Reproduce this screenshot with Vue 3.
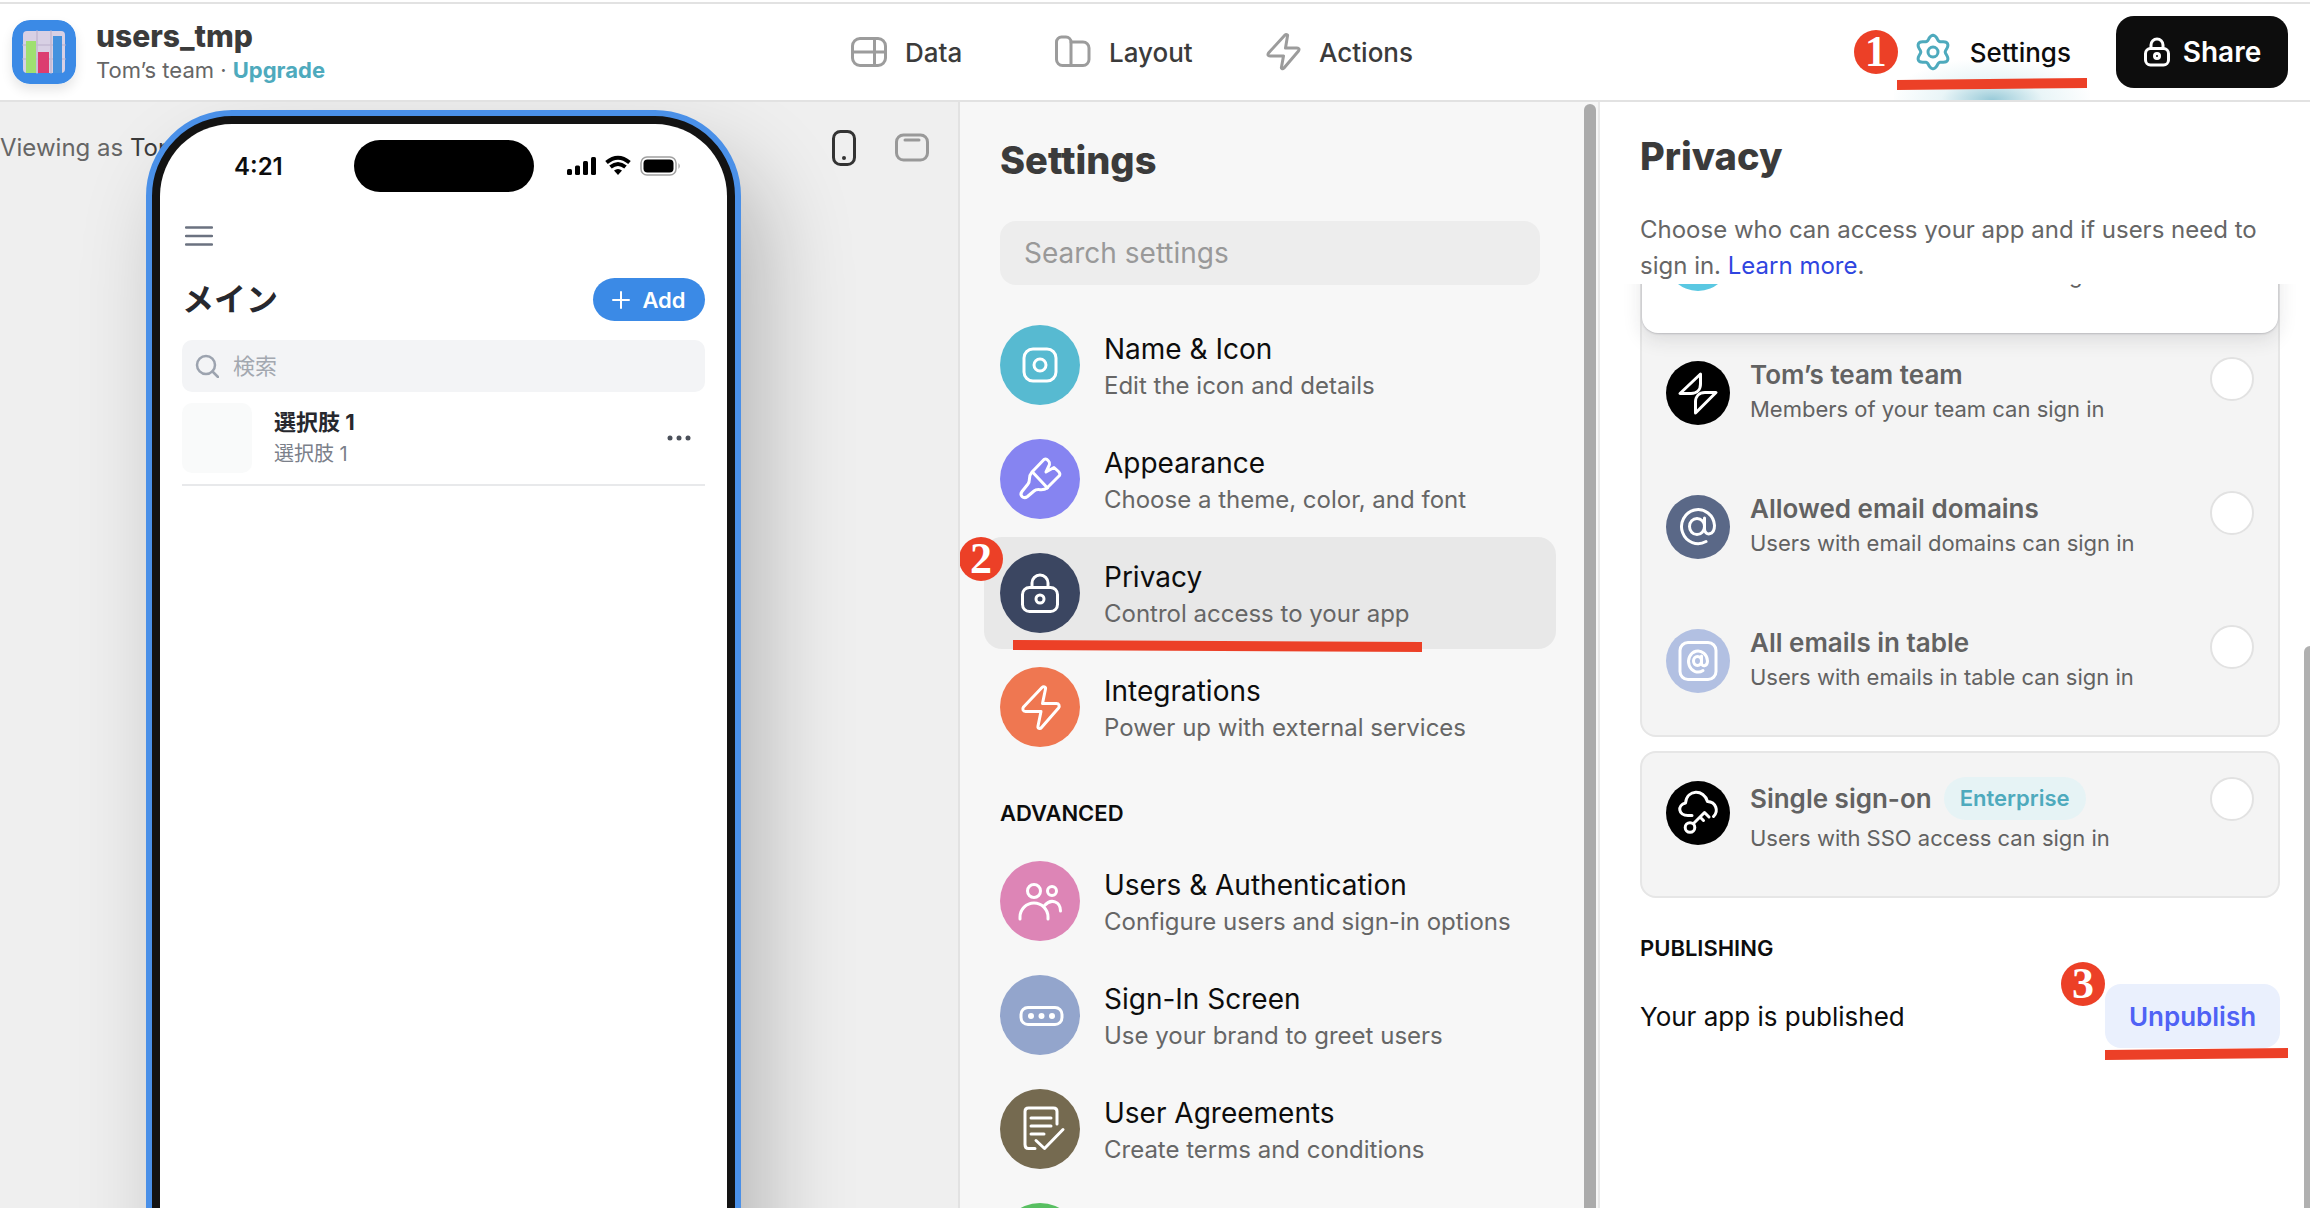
<template>
  <div class="app">
    <header class="topbar">
      <div class="brand">
        <svg class="app-icon" viewBox="0 0 64 64" aria-hidden="true">
          <rect width="64" height="64" rx="18" fill="#3b8ae6" />
          <rect x="11" y="11" width="42" height="42" rx="4" fill="#d8d0e4" />
          <path d="M25 11v42M39 11v42M11 25h42M11 39h42" stroke="#c3b9d2" stroke-width="1.5" />
          <rect x="14" y="21" width="10" height="32" fill="#9fe070" />
          <rect x="26" y="32" width="11" height="21" fill="#dc3d70" />
          <rect x="41" y="16" width="9" height="37" fill="#4592de" />
        </svg>
        <div>
          <div class="app-name">users_tmp</div>
          <div class="team">Tom’s team · <a href="#" class="upgrade">Upgrade</a></div>
        </div>
      </div>

      <nav class="tabs">
        <a v-for="tab in tabs" :key="tab.label" href="#" class="tab">
          <svg class="tab-icon" viewBox="0 0 40 40" aria-hidden="true">
            <path v-for="d in tab.paths" :key="d" :d="d" />
          </svg>
          {{ tab.label }}
        </a>
      </nav>

      <div class="top-actions">
        <a href="#" class="settings-link">
          <svg class="gear" viewBox="0 0 38 38" aria-hidden="true">
            <path :d="gearPath" />
            <circle cx="19" cy="19" r="5" />
          </svg>
          <span>Settings</span>
          <span class="step step-settings">1</span>
          <span class="mark mark-settings"></span>
        </a>
        <button class="share" type="button">
          <svg class="share-icon" viewBox="0 0 28 30" aria-hidden="true">
            <rect x="2.5" y="11.5" width="23" height="16.5" rx="5" />
            <path d="M8 11V8a6 6 0 0 1 12 0v3" />
            <circle cx="14" cy="19" r="2.5" />
          </svg>
          Share
        </button>
      </div>
    </header>

    <main class="workspace">
      <section class="stage">
        <div class="viewing">Viewing as <span>Tom</span></div>
        <div class="phone">
          <div class="screen">
            <div class="status-bar">
              <span class="clock">4:21</span>
              <span class="island"></span>
              <svg class="status-icons" viewBox="0 0 116 22" aria-hidden="true">
                <rect x="1" y="14" width="5" height="6" rx="1.5" />
                <rect x="9" y="10.5" width="5" height="9.5" rx="1.5" />
                <rect x="17" y="6" width="5" height="14" rx="1.5" />
                <rect x="25" y="2" width="5" height="18" rx="1.5" />
                <path d="M40.5 7.5q11.5-9.5 23 0" class="wave" />
                <path d="M44.5 12q7.5-6 15 0" class="wave" />
                <path d="M48 15.5q4-3 8 0l-4 4.5z" />
                <rect x="75" y="2" width="35" height="18" rx="6" class="battery" />
                <rect x="77.5" y="4.5" width="30" height="13" rx="4" />
                <path d="M112.5 8v6q2.5-3 0-6z" fill="#a0a0a0" />
              </svg>
            </div>
            <button class="menu" type="button" aria-label="Menu">
              <svg viewBox="0 0 28 20"><path d="M1 1.5h26M1 10h26M1 18.5h26" /></svg>
            </button>
            <div class="screen-head">
              <h2>メイン</h2>
              <button class="add" type="button">
                <svg viewBox="0 0 18 18" aria-hidden="true"><path d="M9 1v16M1 9h16" /></svg>
                Add
              </button>
            </div>
            <label class="phone-search">
              <svg viewBox="0 0 24 24" aria-hidden="true"><circle cx="11" cy="11" r="9" /><path d="M17.5 17.5l5.5 5.5" /></svg>
              <input type="text" placeholder="検索" aria-label="検索" />
            </label>
            <div class="record">
              <div class="thumb"></div>
              <div class="record-text">
                <div class="record-title">選択肢 1</div>
                <div class="record-sub">選択肢 1</div>
              </div>
              <button class="more" type="button" aria-label="More">
                <svg viewBox="0 0 24 6"><circle cx="3" cy="3" r="2.5" /><circle cx="12" cy="3" r="2.5" /><circle cx="21" cy="3" r="2.5" /></svg>
              </button>
            </div>
          </div>
        </div>
        <div class="devices">
          <button type="button" aria-label="Phone">
            <svg viewBox="0 0 40 40"><rect x="9.5" y="3.5" width="21" height="33" rx="7" stroke="#333" /><circle cx="20" cy="30" r="2" fill="#333" /></svg>
          </button>
          <button type="button" aria-label="Tablet">
            <svg viewBox="0 0 40 40"><rect x="4.5" y="7" width="31" height="25" rx="7" stroke="#999" /><path d="M13 12h14" stroke="#999" /></svg>
          </button>
        </div>
      </section>

      <section class="settings">
        <h1>Settings</h1>
        <input class="search" type="text" placeholder="Search settings" aria-label="Search settings" />
        <nav class="group">
          <a v-for="item in general" :key="item.title" href="#" class="item" :class="[item.tone, { active: item.active }]">
            <svg class="badge" viewBox="0 0 80 80" aria-hidden="true">
              <path v-for="d in item.paths" :key="d" :d="d" />
            </svg>
            <span class="item-text">
              <span class="item-title">{{ item.title }}</span>
              <span class="item-sub">{{ item.sub }}</span>
            </span>
            <template v-if="item.active">
              <span class="step step-privacy">2</span>
              <span class="mark mark-privacy"></span>
            </template>
          </a>
        </nav>
        <h3 class="caption">ADVANCED</h3>
        <nav class="group">
          <a v-for="item in advanced" :key="item.title" href="#" class="item" :class="item.tone">
            <svg class="badge" viewBox="0 0 80 80" aria-hidden="true">
              <path v-for="d in item.paths" :key="d" :d="d" />
            </svg>
            <span class="item-text">
              <span class="item-title">{{ item.title }}</span>
              <span class="item-sub">{{ item.sub }}</span>
            </span>
          </a>
          <div class="item green"><span class="badge"></span></div>
        </nav>
        <div class="scrollbar"></div>
      </section>

      <section class="privacy">
        <div class="privacy-head">
          <h1>Privacy</h1>
          <p>Choose who can access your app and if users need to sign in. <a href="#">Learn more</a>.</p>
        </div>
        <div class="privacy-body">
          <div class="card card-first">
            <div class="option selected">
              <span class="option-icon cyan"></span>
              <div class="option-text">
                <span class="option-title"></span>
                <span class="option-sub">Users with email access can sign in</span>
              </div>
            </div>
            <label v-for="option in options" :key="option.title" class="option">
              <svg class="option-icon" :class="option.tone" viewBox="0 0 64 64" aria-hidden="true">
                <path v-for="d in option.paths" :key="d" :d="d" />
              </svg>
              <span class="option-text">
                <span class="option-title">{{ option.title }}</span>
                <span class="option-sub">{{ option.sub }}</span>
              </span>
              <input type="radio" name="access" />
            </label>
          </div>

          <div class="card">
            <label class="option">
              <svg class="option-icon black" viewBox="0 0 64 64" aria-hidden="true">
                <path d="M26 34.5h-4C12 34.5 11 24 19.5 22 21 8 38 8 41.5 20.5 50 21 53 30 47.5 35.5" />
                <circle cx="24" cy="46.5" r="4.8" />
                <path d="M27.5 42.5L38.5 31.5l4.5 4.5M34 36l3.5 3.5" />
              </svg>
              <span class="option-text">
                <span class="option-title">Single sign-on <span class="pill">Enterprise</span></span>
                <span class="option-sub">Users with SSO access can sign in</span>
              </span>
              <input type="radio" name="access" />
            </label>
          </div>

          <h3 class="caption">PUBLISHING</h3>
          <div class="publish">
            <span>Your app is published</span>
            <button type="button" class="unpublish">
              Unpublish
              <span class="step step-publish">3</span>
              <span class="mark mark-publish"></span>
            </button>
          </div>
        </div>
        <div class="privacy-scrollbar"></div>
      </section>
    </main>
  </div>
</template>

<script setup>
const bolt = 'M45.5 22L42.5 36.5H56.5c2.5 0 3.5 2.5 2 4.5L41.5 60.5c-1.5 2-4 1-3.5-1.5L41 44.5H25.5c-2.5 0-3.5-2.5-2-4.5L42 20.5c1.5-1.5 4-.5 3.5 1.5z';

const tabs = [
  {
    label: 'Data',
    paths: ['M11 6.5h18a7.5 7.5 0 0 1 7.5 7.5v12a7.5 7.5 0 0 1-7.5 7.5H11A7.5 7.5 0 0 1 3.5 26V14A7.5 7.5 0 0 1 11 6.5z', 'M3.5 20h33M25.5 6.5v27'],
  },
  {
    label: 'Layout',
    paths: ['M8.5 5h4.5a5 5 0 0 1 5 5v23.5H9.5a6 6 0 0 1-6-6V10a5 5 0 0 1 5-5z', 'M18 10h12a6 6 0 0 1 6 6v11.5a6 6 0 0 1-6 6H17'],
  },
  {
    label: 'Actions',
    paths: ['M24.5 4L22.5 16H34c2 0 2.5 1.5 1.5 3L21 36c-1.5 1.5-3 .5-2.5-1L20.5 24H7c-2 0-2.5-1.5-1.5-3L22 3c1-1 3-.5 2.5 1z'],
  },
];

const general = [
  {
    title: 'Name & Icon',
    sub: 'Edit the icon and details',
    tone: 'teal',
    paths: ['M33 24h14a9 9 0 0 1 9 9v14a9 9 0 0 1-9 9H33a9 9 0 0 1-9-9V33a9 9 0 0 1 9-9z', 'M40 34a6 6 0 1 1 0 12a6 6 0 1 1 0-12z'],
  },
  {
    title: 'Appearance',
    sub: 'Choose a theme, color, and font',
    tone: 'violet',
    paths: ['M44 20.5L32 33c-4.5 5-1 8.5-4 12l-6 7.5c-3 4 1.5 8 5.5 5l6.5-5.5c4-3.5 8 1 13-3L59.5 36.5q1-2-1-4L54 28.5l-8 4.5 3.5-7.5q.5-2-1-3.5l-1.5-1.5q-1.5-1-3 0z', 'M32.5 33L47.5 49'],
  },
  {
    title: 'Privacy',
    sub: 'Control access to your app',
    tone: 'navy',
    active: true,
    paths: ['M29.5 34.5h21a7 7 0 0 1 7 7v10a7 7 0 0 1-7 7h-21a7 7 0 0 1-7-7v-10a7 7 0 0 1 7-7z', 'M32 34v-4a8 8 0 0 1 16 0v4', 'M40 42a4 4 0 1 1 0 8a4 4 0 1 1 0-8z'],
  },
  {
    title: 'Integrations',
    sub: 'Power up with external services',
    tone: 'orange',
    paths: [bolt],
  },
];

const advanced = [
  {
    title: 'Users & Authentication',
    sub: 'Configure users and sign-in options',
    tone: 'pink',
    paths: ['M34 23.5a6.5 6.5 0 1 1 0 13a6.5 6.5 0 1 1 0-13z', 'M52 25.5a4.5 4.5 0 1 1 0 9a4.5 4.5 0 1 1 0-9z', 'M20 58v-2a14 14 0 0 1 28 0v2', 'M44.5 44.5C51 37 60.5 40.5 60.5 50'],
  },
  {
    title: 'Sign-In Screen',
    sub: 'Use your brand to greet users',
    tone: 'slate',
    paths: ['M28 32.5h27a7 7 0 0 1 7 7v3a7 7 0 0 1-7 7H28a7 7 0 0 1-7-7v-3a7 7 0 0 1 7-7z', 'M31 39.5a1.5 1.5 0 1 1 0 3a1.5 1.5 0 1 1 0-3z', 'M41.5 39.5a1.5 1.5 0 1 1 0 3a1.5 1.5 0 1 1 0-3z', 'M52 39.5a1.5 1.5 0 1 1 0 3a1.5 1.5 0 1 1 0-3z'],
  },
  {
    title: 'User Agreements',
    sub: 'Create terms and conditions',
    tone: 'brown',
    paths: ['M57 35V22.5q0-3.5-3.5-3.5h-25q-3.5 0-3.5 3.5v33q0 4 3.5 4H35', 'M31 29h20M31 37h20M31 45h13', 'M36 51.5l8.5 8L63 40.5'],
  },
];

const options = [
  {
    title: 'Tom’s team team',
    sub: 'Members of your team can sign in',
    tone: 'black',
    paths: ['M34.5 13L14 32.5h11c6 0 9.5-4 9.5-9.5z', 'M50 31.5H39c-6 0-9.5 4-9.5 9.5v11z'],
  },
  {
    title: 'Allowed email domains',
    sub: 'Users with email domains can sign in',
    tone: 'steel',
    paths: ['M31 23.5a7.5 8 0 1 1 0 16a7.5 8 0 1 1 0-16z', 'M38.5 23v11c0 7 10 7 10-3.5A16.5 17 0 1 0 40 46.5'],
  },
  {
    title: 'All emails in table',
    sub: 'Users with emails in table can sign in',
    tone: 'periwinkle',
    paths: ['M22 13.5h20a8 8 0 0 1 8 8v21a8 8 0 0 1-8 8H22a8 8 0 0 1-8-8v-21a8 8 0 0 1 8-8z', 'M31.5 27.5a4 4.5 0 1 1 0 9a4 4.5 0 1 1 0-9z', 'M35.5 27v7c0 4 6 4 6-2A9.5 10.5 0 1 0 37 41.5'],
  },
];

// six soft teeth around the centre
const gearPath = buildGear(19, 14.5, 2.3, 6);

function buildGear(center, radius, depth, teeth) {
  const points = [];
  for (let deg = 0; deg < 360; deg += 5) {
    const a = (deg * Math.PI) / 180;
    const r = radius + depth * Math.cos(teeth * a);
    points.push(`${(center + r * Math.sin(a)).toFixed(1)} ${(center - r * Math.cos(a)).toFixed(1)}`);
  }
  return `M${points.join('L')}Z`;
}
</script>

<style>
body {
  background: #fff;
}
</style>

<style scoped>
.app {
  display: flex;
  flex-direction: column;
  height: 100vh;
  padding-top: 2px;
  box-sizing: border-box;
  overflow: hidden;
  font-family: Inter, "Noto Sans CJK JP", sans-serif;
  color: #0d0d0d;
}

.app *,
.app *::before {
  box-sizing: border-box;
}

svg {
  display: block;
  flex: none;
  fill: none;
  stroke-width: 3;
  stroke-linecap: round;
  stroke-linejoin: round;
}

a {
  color: inherit;
  text-decoration: none;
}

button {
  padding: 0;
  border: 0;
  background: none;
  font: inherit;
  color: inherit;
}

input {
  font: inherit;
}

h1,
h2,
h3,
p {
  margin: 0;
}

/* top bar */
.topbar {
  display: grid;
  grid-template-columns: 1fr auto 1fr;
  align-items: center;
  height: 100px;
  flex: none;
  border-top: 2px solid #e2e2e2;
  border-bottom: 2px solid #e2e2e2;
}

.brand {
  display: flex;
  align-items: center;
  gap: 20px;
  padding-left: 12px;
}

.app-icon {
  width: 64px;
  height: 64px;
  border-radius: 18px;
  box-shadow: 0 6px 12px rgba(0, 0, 0, 0.1);
}

.app-name {
  padding-top: 2px;
  font-size: 30px;
  line-height: 34px;
  font-weight: 800;
  color: #3b3b3b;
}

.team {
  font-size: 22px;
  line-height: 34px;
  color: #666;
}

.upgrade {
  font-weight: 700;
  color: #4eaabd;
}

.tabs {
  display: grid;
  grid-template-columns: 204px 210px 198px;
}

.tab {
  display: flex;
  align-items: center;
  gap: 16px;
  font-size: 26px;
  font-weight: 500;
  color: #3b3b3b;
}

.tab-icon {
  width: 40px;
  height: 40px;
  stroke: #9c9c9c;
}

.top-actions {
  display: flex;
  align-self: stretch;
  justify-content: flex-end;
  align-items: center;
  gap: 26px;
  padding-right: 22px;
}

.settings-link {
  position: relative;
  display: flex;
  align-items: center;
  align-self: stretch;
  gap: 18px;
  padding: 0 19px 0 20px;
  background: radial-gradient(ellipse 52% 44% at 50% 100%, #98cad8, rgba(200, 230, 236, 0.4) 50%, rgba(255, 255, 255, 0));
  font-size: 26px;
  font-weight: 500;
}

.gear {
  width: 38px;
  height: 38px;
  stroke: #4eaabd;
}

.share {
  display: flex;
  align-items: center;
  justify-content: center;
  gap: 12px;
  width: 172px;
  height: 72px;
  border-radius: 18px;
  background: #0d0d0d;
  color: #fff;
  font-size: 28px;
  font-weight: 600;
}

.share-icon {
  width: 28px;
  height: 30px;
  stroke: #fff;
}

/* red walkthrough marks */
.step {
  position: absolute;
  width: 44px;
  height: 44px;
  border-radius: 50%;
  background: #ec4027;
  color: #fff;
  font-family: "Liberation Serif", serif;
  font-size: 44px;
  font-weight: 700;
  line-height: 44px;
  text-align: center;
}

.mark {
  position: absolute;
  height: 12px;
  background: #ec4027;
  clip-path: polygon(0 2px, 100% 0, 100% 10px, 0 100%);
}

.step-settings {
  top: 26px;
  left: -40px;
}

.mark-settings {
  left: 3px;
  right: 3px;
  bottom: 10px;
}

.step-privacy {
  top: 0;
  left: -25px;
}

.mark-privacy {
  left: 29px;
  width: 409px;
  bottom: -3px;
  clip-path: polygon(0 0, 100% 2px, 100% 100%, 0 10px);
}

.step-publish {
  top: -22px;
  left: -44px;
}

.mark-publish {
  top: 100%;
  left: 0;
  right: -8px;
}

/* workspace */
.workspace {
  display: grid;
  grid-template-columns: 1fr 640px 712px;
  flex: 1;
  min-height: 0;
}

.stage {
  position: relative;
  display: grid;
  grid-template-columns: 595px 1fr;
  padding: 8px 26px 0 146px;
  overflow: hidden;
  background: #efefef;
}

.viewing {
  position: absolute;
  top: 28px;
  left: 0;
  font-size: 24px;
  line-height: 36px;
  color: #666;
}

.viewing span {
  color: #3b3b3b;
}

.phone {
  position: relative;
  height: 1240px;
  padding: 8px;
  border: 6px solid #4a90e8;
  border-radius: 86px;
  background: #131313;
  box-shadow: 24px 48px 90px rgba(0, 0, 0, 0.24);
}

.screen {
  height: 100%;
  padding: 16px 22px;
  border-radius: 72px;
  background: #fff;
}

.status-bar {
  display: grid;
  grid-template-columns: 1fr 180px 1fr;
  align-items: center;
  height: 52px;
}

.clock {
  padding-left: 52px;
  font-size: 24px;
  font-weight: 600;
}

.island {
  height: 52px;
  border-radius: 26px;
  background: #000;
}

.status-icons {
  width: 116px;
  height: 22px;
  margin-left: 32px;
  fill: #000;
}

.wave {
  fill: none;
  stroke: #000;
  stroke-width: 4;
  stroke-linecap: butt;
}

.battery {
  fill: none;
  stroke: #a0a0a0;
  stroke-width: 1.5;
}

.menu {
  display: block;
  margin: 34px 0 0 3px;
}

.menu svg {
  width: 28px;
  height: 20px;
  stroke: #6b7280;
  stroke-width: 2.5;
}

.screen-head {
  display: flex;
  align-items: center;
  justify-content: space-between;
  margin-top: 32px;
}

.screen-head h2 {
  font-size: 32px;
  line-height: 40px;
  font-weight: 700;
  color: #27282e;
}

.add {
  display: flex;
  align-items: center;
  justify-content: center;
  gap: 12px;
  width: 112px;
  height: 43px;
  border-radius: 22px;
  background: #3b8ae6;
  color: #fff;
  font-size: 22px;
  font-weight: 600;
}

.add svg {
  width: 18px;
  height: 18px;
  stroke: #fff;
  stroke-width: 2;
}

.phone-search {
  display: flex;
  align-items: center;
  gap: 14px;
  height: 52px;
  margin-top: 19px;
  padding: 0 13px;
  border-radius: 10px;
  background: #f3f4f6;
}

.phone-search svg {
  width: 24px;
  height: 24px;
  stroke: #9ca3af;
  stroke-width: 2.5;
}

.phone-search input {
  flex: 1;
  min-width: 0;
  padding: 0;
  border: 0;
  background: none;
  font-size: 22px;
}

.phone-search input::placeholder {
  color: #a3a8b0;
}

.record {
  display: flex;
  align-items: center;
  height: 94px;
  border-bottom: 2px solid #e8e9eb;
}

.thumb {
  width: 70px;
  height: 70px;
  border-radius: 10px;
  background: #f9fafa;
}

.record-text {
  flex: 1;
  margin-left: 22px;
}

.record-title {
  font-size: 22px;
  line-height: 32px;
  font-weight: 700;
  color: #27282e;
}

.record-sub {
  font-size: 20px;
  line-height: 32px;
  color: #7b808a;
}

.more {
  margin-right: 14px;
}

.more svg {
  width: 24px;
  height: 6px;
  fill: #4b505a;
}

.devices {
  display: flex;
  justify-content: flex-end;
  gap: 28px;
  height: 40px;
  margin-top: 18px;
}

.devices svg {
  width: 40px;
  height: 40px;
}

/* settings list */
.settings {
  position: relative;
  padding: 35px 42px 0 24px;
  overflow: hidden;
  border-left: 2px solid #e2e2e2;
  background: #f7f7f7;
}

h1 {
  font-size: 38px;
  line-height: 46px;
  font-weight: 800;
  color: #3b3b3b;
}

.settings h1 {
  padding-left: 16px;
}

.search {
  display: block;
  width: 540px;
  height: 64px;
  margin: 38px 0 24px 16px;
  padding: 0 24px;
  border: 0;
  border-radius: 16px;
  background: #ededed;
  font-size: 28px;
}

.search::placeholder {
  color: #999;
}

.group {
  display: flex;
  flex-direction: column;
  gap: 2px;
}

.item {
  position: relative;
  display: flex;
  align-items: center;
  gap: 24px;
  height: 112px;
  padding: 0 16px;
  border-radius: 18px;
}

.item.active {
  background: #e8e8e8;
  /* keeps the step number above the panel edge */
  z-index: 1;
}

.badge {
  flex: none;
  width: 80px;
  height: 80px;
  border-radius: 50%;
  background: var(--tone);
  stroke: #fff;
}

.teal { --tone: #57bad1; }
.violet { --tone: #8684f1; }
.navy { --tone: #3b4661; }
.orange { --tone: #ef7751; }
.pink { --tone: #dd85b6; }
.slate { --tone: #93a5cc; }
.brown { --tone: #756a50; }
.green { --tone: #58bf61; }
.black { --tone: #000; }
.steel { --tone: #5a6887; }
.periwinkle { --tone: #b2c0e2; }
.cyan { --tone: #5ac8e2; }

.item-text {
  display: flex;
  flex-direction: column;
  padding-top: 6px;
  line-height: 36px;
}

.item-title {
  font-size: 28px;
}

.item-sub {
  font-size: 24px;
  line-height: 38px;
  color: #666;
}

.caption {
  font-size: 22px;
  line-height: 28px;
  font-weight: 600;
}

.settings .caption {
  margin: 36px 0 18px;
  padding-left: 16px;
}

.scrollbar {
  position: absolute;
  top: 2px;
  right: 2px;
  bottom: 0;
  width: 12px;
  border-radius: 6px 6px 0 0;
  background: #ababab;
}

/* privacy panel */
.privacy {
  position: relative;
  display: flex;
  flex-direction: column;
  min-height: 0;
  border-left: 2px solid #e8e8e8;
  background: #fff;
}

.privacy-head {
  padding: 31px 40px 0;
}

.privacy-head p {
  margin-top: 33px;
  font-size: 24px;
  line-height: 36px;
  color: #666;
}

.privacy-head a {
  color: #2f45e0;
}

.privacy-body {
  flex: 1;
  min-height: 0;
  padding: 0 30px 0 40px;
  overflow: hidden;
}

.card {
  margin-bottom: 14px;
  border: 2px solid #e6e6e6;
  border-radius: 16px;
  background: #f4f4f4;
}

.card-first {
  margin-top: -87px;
}

.option {
  display: flex;
  align-items: flex-start;
  gap: 20px;
  padding: 24px 24px 40px;
}

.option.selected {
  border-radius: 16px;
  background: #fff;
  box-shadow: 0 1px 2px rgba(30, 32, 45, 0.2), 0 6px 20px rgba(30, 32, 45, 0.12);
}

.option-icon {
  flex: none;
  width: 64px;
  height: 64px;
  margin-top: 4px;
  border-radius: 50%;
  background: var(--tone);
  stroke: #fff;
}

.option-text {
  display: flex;
  flex-direction: column;
  flex: 1;
  color: #626262;
}

.option-title {
  display: flex;
  align-items: center;
  gap: 12px;
  min-height: 34px;
  font-size: 26px;
  font-weight: 600;
}

.option-sub {
  font-size: 22px;
  line-height: 36px;
}

.option input {
  appearance: none;
  width: 44px;
  height: 44px;
  margin: 0;
  border: 2px solid #e2e2e2;
  border-radius: 50%;
  background: #fff;
}

.pill {
  padding: 0 16px;
  border-radius: 22px;
  background: #e6f3f5;
  font-size: 22px;
  line-height: 43px;
  color: #4eaabd;
}

.privacy-body .caption {
  margin: 36px 0 22px;
}

.publish {
  display: flex;
  align-items: center;
  justify-content: space-between;
  font-size: 26px;
}

.unpublish {
  position: relative;
  width: 175px;
  height: 64px;
  border-radius: 16px;
  background: #eaf0fd;
  font-weight: 600;
  color: #4f62f5;
}

.privacy-scrollbar {
  position: absolute;
  top: 544px;
  right: 0;
  bottom: 0;
  width: 6px;
  border-radius: 6px 0 0 0;
  background: #b0b0b0;
}
</style>
